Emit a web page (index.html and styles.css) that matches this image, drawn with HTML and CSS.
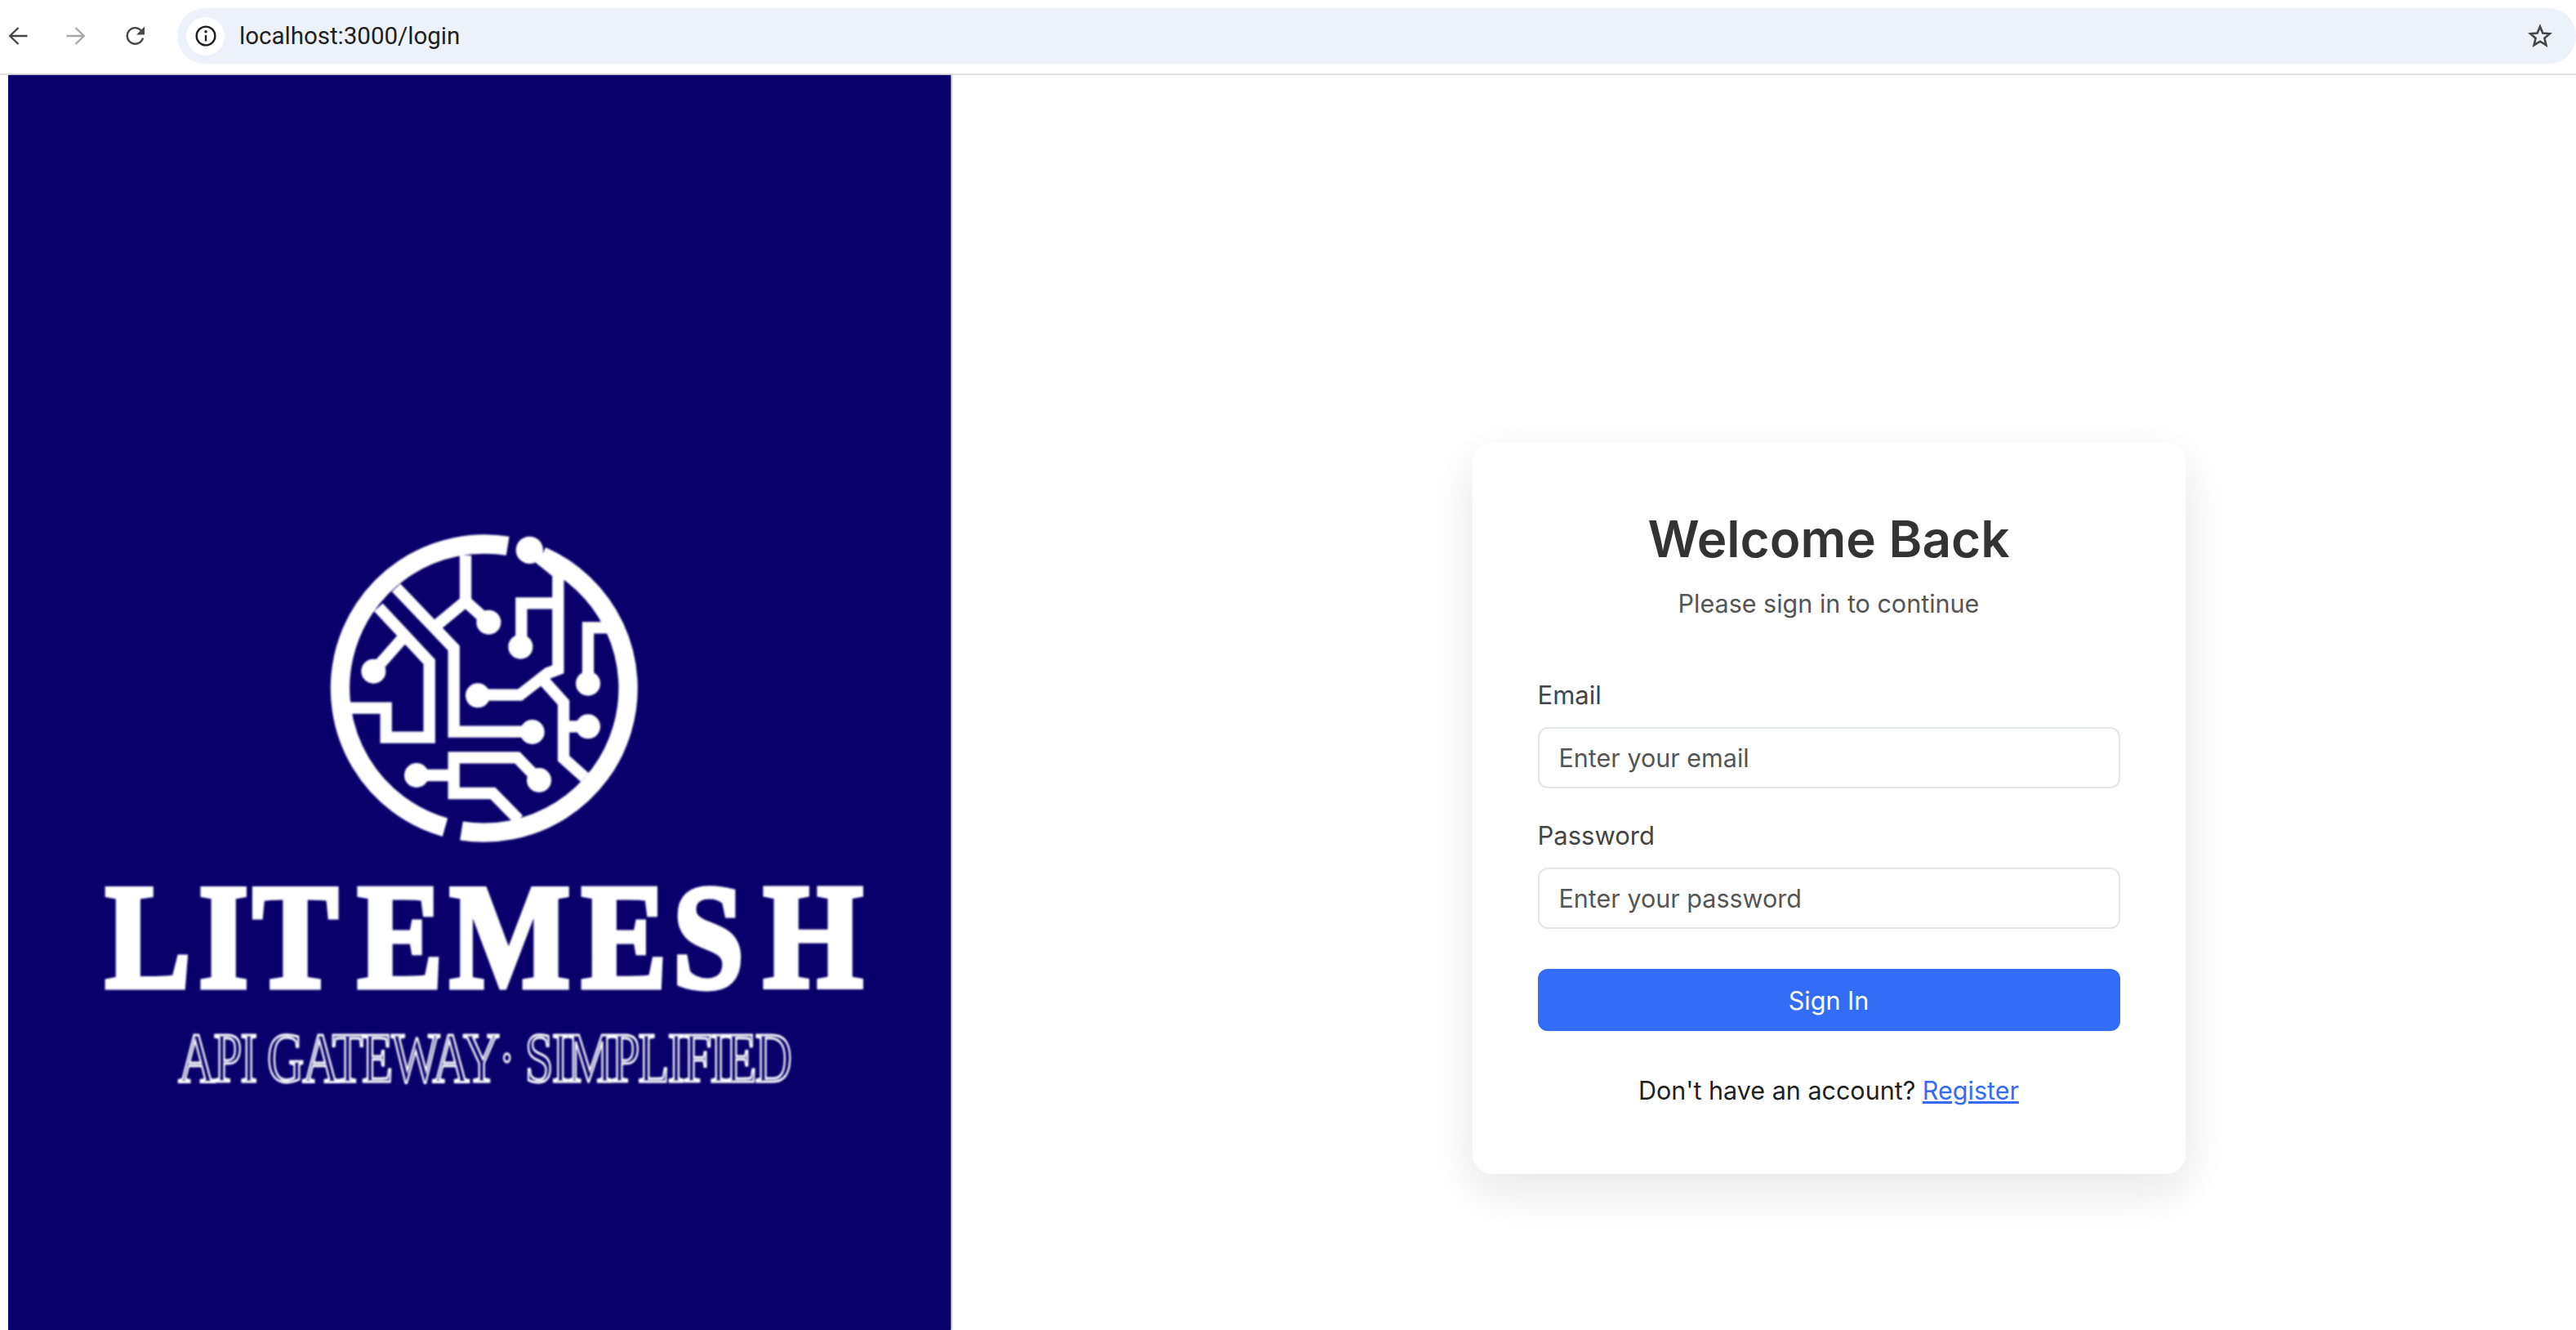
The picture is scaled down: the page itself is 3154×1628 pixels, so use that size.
FILE: index.html
```html
<!DOCTYPE html>
<html lang="en">
<head>
<meta charset="utf-8">
<title>LiteMesh Login</title>
<link rel="stylesheet" href="styles.css">
</head>
<body>
<header class="toolbar">
  <nav class="nav-icons">
    <svg class="nav-icon" viewBox="0 0 24 24"><path d="M23.500 12H2.500M12.500 2 2.200 12l10.300 10"/></svg>
    <svg class="nav-icon nav-icon-off" viewBox="0 0 24 24"><path d="M.5 12h21M11.500 2l10.300 10-10.300 10"/></svg>
    <svg class="nav-icon nav-icon-reload" viewBox="0 0 24 24"><path d="M21 14.500A9.800 9.800 0 1 1 19 5.500L21.500 8"/><path class="fill" d="M23 .5v10H13z"/></svg>
  </nav>
  <div class="address">
    <span class="chip">
      <svg class="info" viewBox="0 0 24 24"><circle cx="12" cy="12" r="10.500"/><path d="M12 11v7"/><circle class="fill" cx="12" cy="7.200" r="1.600"/></svg>
    </span>
    <span class="url">localhost:3000/login</span>
    <svg class="star" viewBox="0 0 30 30"><path d="M15 3.500l3.300 8 8.700.7-6.600 5.600 2 8.400-7.400-4.500-7.400 4.500 2-8.400L3 12.200l8.700-.7z"/></svg>
  </div>
</header>
<main class="page">
  <aside class="brand">
    <svg class="brand-art" viewBox="10 92 1154 1536">
      <g class="mark" transform="translate(380 630) scale(.33333)">
        <path class="ring" d="M725 115A530 530 0 0 0 495 1148"/>
        <path class="ring" d="M555 1161A530 530 0 0 0 850 152"/>
        <path d="M570 150V318L655 395M570 318L465 405"/>
        <path d="M315 268L527 490V797H815"/>
        <path d="M250 340L437 540V818H278V710H100"/>
        <path d="M232 575L335 458"/>
        <path d="M805 130L910 215V568L872 582L770 662H615"/>
        <path d="M775 485V325H910"/>
        <path d="M860 612L930 690V895L1008 965M930 778H1020"/>
        <path d="M1020 620V415H1090"/>
        <path d="M390 957H527M840 975L760 892H527V1023H670L765 1120"/>
        <circle cx="805" cy="130" r="50"/>
        <circle cx="655" cy="395" r="45"/>
        <circle cx="772" cy="485" r="45"/>
        <circle cx="232" cy="575" r="45"/>
        <circle cx="615" cy="664" r="45"/>
        <circle cx="1020" cy="620" r="45"/>
        <circle cx="815" cy="798" r="45"/>
        <circle cx="1020" cy="778" r="45"/>
        <circle cx="390" cy="957" r="45"/>
        <circle cx="840" cy="975" r="45"/>
      </g>
      <text class="brand-name" transform="scale(.86 1)" x="150 283 360 509 640 828 958 1087" y="1208">LITEMESH</text>
      <text class="brand-tag" transform="scale(.72 1)" x="303" y="1324" textLength="1044">API GATEWAY· SIMPLIFIED</text>
    </svg>
  </aside>
  <section class="content">
    <form class="card">
      <h1 class="title">Welcome Back</h1>
      <p class="subtitle">Please sign in to continue</p>
      <div class="field">
        <label class="label" for="email">Email</label>
        <input class="input" id="email" type="email" placeholder="Enter your email">
      </div>
      <div class="field">
        <label class="label" for="password">Password</label>
        <input class="input" id="password" type="password" placeholder="Enter your password">
      </div>
      <button class="submit" type="button">Sign In</button>
      <p class="foot">Don't have an account? <a class="link" href="#">Register</a></p>
    </form>
  </section>
</main>
</body>
</html>
```
FILE: styles.css
```css
* { box-sizing: border-box; }
html, body { margin: 0; height: 100%; overflow: hidden; background: #fff; }
body { font-family: Inter, "Liberation Sans", sans-serif; display: flex; flex-direction: column; }

.toolbar { height: 92px; flex: none; display: flex; align-items: flex-start; padding-top: 10px; border-bottom: 2px solid #e0e0e0; background: #fff; }
.nav-icons { width: 217px; flex: none; height: 68px; display: flex; align-items: center; gap: 47px; padding-left: 10px; }
.nav-icon { width: 24px; height: 24px; flex: none; fill: none; stroke: #474747; stroke-width: 2.400; }
.nav-icon-off { stroke: #a8a8a8; }
.nav-icon-reload { margin-left: 2px; }
.nav-icon .fill { fill: #474747; stroke: none; }

.address { flex: 1; height: 68px; background: #edf2fa; border-radius: 34px; display: flex; align-items: center; padding: 0 29px 0 11px; }
.chip { width: 47px; height: 47px; flex: none; border-radius: 50%; background: #fff; display: flex; align-items: center; justify-content: center; }
.info { width: 26px; height: 26px; fill: none; stroke: #1f1f1f; stroke-width: 2.200; }
.info .fill { fill: #1f1f1f; stroke: none; }
.url { margin-left: 18px; font: 400 29.500px Roboto, sans-serif; color: #1f1f1f; flex: 1; }
.star { width: 30px; height: 30px; flex: none; fill: none; stroke: #444; stroke-width: 2.600; }

.page { flex: 1; min-height: 0; display: flex; padding-left: 10px; }
.brand { width: 1154px; flex: none; background: #0a006b; box-shadow: 1px 0 2px rgba(10, 0, 107, .55); }
.brand-art { display: block; width: 1154px; height: 1536px; overflow: visible; filter: blur(.8px); }
.mark path { fill: none; stroke: #fff; stroke-width: 43; }
.mark .ring { stroke-width: 70; }
.mark circle { fill: #fff; }
.brand-name { font: 700 182px "Liberation Serif", serif; fill: #fff; stroke: #fff; stroke-width: 7; }
.brand-tag { font: 400 87px "Liberation Serif", serif; fill: none; stroke: #fff; stroke-width: 3; }

.content { flex: 1; display: flex; justify-content: center; align-items: flex-start; padding: 450px 0 0 160px; }
.card { width: 873px; height: 895px; padding: 82px 80px 0; background: #fff; border-radius: 24px; box-shadow: 0 20px 60px rgba(0, 0, 0, .1); }
.title { margin: 0; font-size: 62px; line-height: 72px; font-weight: 600; color: #333; text-align: center; }
.subtitle { margin: 21px 0 0; font-size: 30.500px; line-height: 44px; color: #555; text-align: center; }
.subtitle + .field { margin-top: 68px; }
.field + .field { margin-top: 36px; }
.label { display: block; font-size: 31px; line-height: 44px; font-weight: 400; color: #444; margin-bottom: 17px; }
.input { display: block; width: 100%; height: 75px; padding: 0 24px; font: 400 30.500px Inter, sans-serif; color: #333; background: #fff; border: 2px solid #e2e6ea; border-radius: 12px; }
.input::placeholder { color: #555; opacity: 1; }
.submit { display: block; width: 100%; height: 76px; margin-top: 49px; border: 0; border-radius: 12px; background: #336cf5; color: #fff; font: 400 30.500px Inter, sans-serif; }
.foot { margin: 51px 0 0; font-size: 30.500px; line-height: 44px; color: #1f1f1f; text-align: center; }
.link { color: #336cf5; text-decoration: underline; }
```
